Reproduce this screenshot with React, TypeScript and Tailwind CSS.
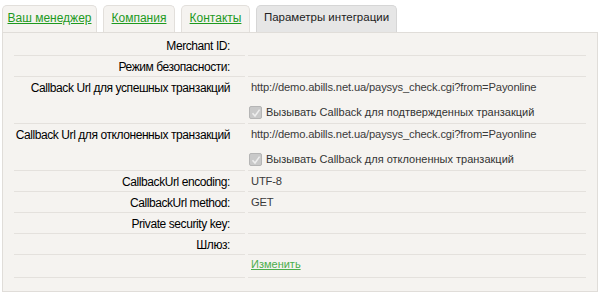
import React from "react";

type Row = {
  label: string;
  value?: string;
  check?: string;
};

const rows: Row[] = [
  { label: "Merchant ID:" },
  { label: "Режим безопасности:" },
  {
    label: "Callback Url для успешных транзакций",
    value: "http://demo.abills.net.ua/paysys_check.cgi?from=Payonline",
    check: "Вызывать Callback для подтвержденных транзакций",
  },
  {
    label: "Callback Url для отклоненных транзакций",
    value: "http://demo.abills.net.ua/paysys_check.cgi?from=Payonline",
    check: "Вызывать Callback для отклоненных транзакций",
  },
  { label: "CallbackUrl encoding:", value: "UTF-8" },
  { label: "CallbackUrl method:", value: "GET" },
  { label: "Private security key:" },
  { label: "Шлюз:" },
];

const tabs = [
  { name: "Ваш менеджер", w: "w-[95px]" },
  { name: "Компания", w: "w-[72px]" },
  { name: "Контакты", w: "w-[69px]" },
];

function Checkbox() {
  return (
    <span className="flex h-[13px] w-[13px] shrink-0 items-center justify-center rounded-[2px] border border-[#b5b5b5] bg-[#c9c9c9]">
      <svg width="10" height="10" viewBox="0 0 10 10">
        <path d="M1.5 5.2 L4 8 L8.6 1.6" fill="none" stroke="#eeeeee" strokeWidth="1.6" />
      </svg>
    </span>
  );
}

export default function App() {
  return (
    <div className="h-[294px] w-[600px] bg-white px-[2px] pt-[5px] font-['Liberation_Sans',Arial,sans-serif] text-[12px] text-[#333]">
      <div className="flex gap-[6px]">
        {tabs.map((t) => (
          <div
            key={t.name}
            className={`${t.w} flex h-[27px] items-center justify-center rounded-t-[5px] border border-b-0 border-[#e2dfdb] bg-[#f5f3f0] pb-[2px]`}
          >
            <a href="#" className="text-[#1e9a1e] underline">
              {t.name}
            </a>
          </div>
        ))}
        <div className="flex h-[27px] w-[141px] items-center justify-center rounded-t-[5px] border border-b-0 border-[#d6d6d6] bg-[#e6e6e6] pb-[2px] text-[11.5px] text-[#222]">
          Параметры интеграции
        </div>
      </div>
      <div className="h-[260px] border border-[#e0ddd9] bg-[#f5f3f0] px-[8px] pt-[2px]">
        <table className="w-full border-separate border-spacing-x-[3px] border-spacing-y-[1px] text-[11px]">
          <tbody>
            {rows.map((r) => (
              <tr key={r.label}>
                <td className="w-[231px] border-b border-[#e4e1dd] pr-[15px] align-top text-right text-[#000]">
                  <div className="flex h-[19px] items-center justify-end whitespace-nowrap text-[12px] tracking-[-0.42px]">
                    {r.label}
                  </div>
                </td>
                <td className="border-b border-[#e4e1dd] pl-[3px] align-top">
                  <div className="flex h-[19px] items-center whitespace-nowrap text-[11.2px] tracking-[-0.15px] text-[#3a3a3a]">
                    {r.value}
                  </div>
                  {r.check && (
                    <div className="-ml-[2px] flex h-[26px] items-end gap-[4px] whitespace-nowrap pb-[4px]">
                      <Checkbox />
                      <span className="leading-[13px]">{r.check}</span>
                    </div>
                  )}
                </td>
              </tr>
            ))}
            <tr>
              <td className="border-b border-[#e4e1dd] align-top">
                <div className="h-[21px]" />
              </td>
              <td className="border-b border-[#e4e1dd] pl-[3px] align-top">
                <a href="#" className="flex h-[17px] items-center text-[#4cae4c] underline">
                  Изменить
                </a>
              </td>
            </tr>
          </tbody>
        </table>
      </div>
    </div>
  );
}
